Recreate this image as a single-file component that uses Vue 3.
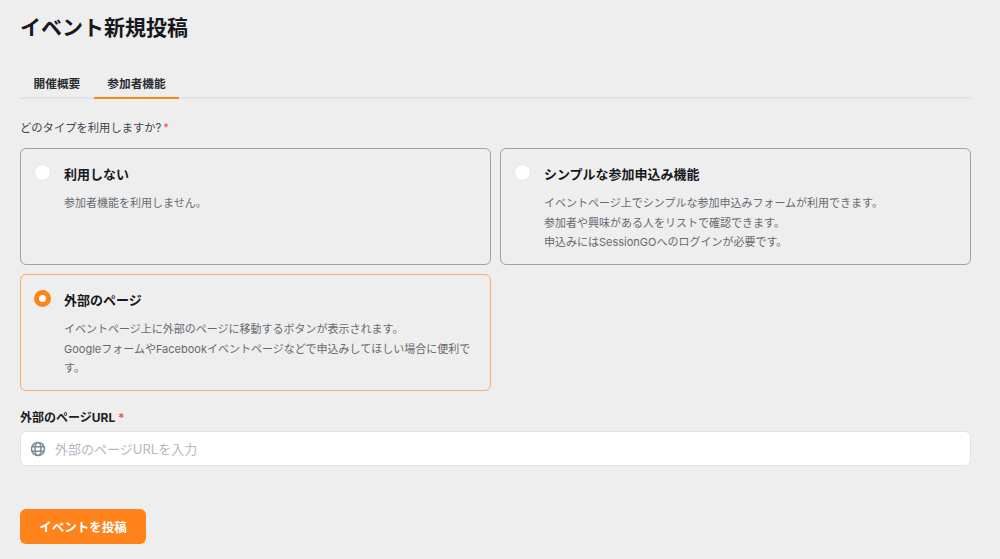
<script setup>
const options = [
  { title: '利用しない', lines: ['参加者機能を利用しません。'], checked: false },
  { title: 'シンプルな参加申込み機能', lines: ['イベントページ上でシンプルな参加申込みフォームが利用できます。', '参加者や興味がある人をリストで確認できます。', '申込みにはSessionGOへのログインが必要です。'], checked: false },
  { title: '外部のページ', lines: ['イベントページ上に外部のページに移動するボタンが表示されます。', 'GoogleフォームやFacebookイベントページなどで申込みしてほしい場合に便利です。'], checked: true }
]
</script>

<template>
  <main class="page">
    <h1 class="title">イベント新規投稿</h1>
    <nav class="tabs">
      <span class="tab">開催概要</span>
      <span class="tab active">参加者機能</span>
    </nav>
    <p class="question">どのタイプを利用しますか?<span class="req q-req">*</span></p>
    <div class="grid">
      <div v-for="o in options" :key="o.title" class="card" :class="{ selected: o.checked }">
        <span class="radio"></span>
        <div class="body">
          <div class="card-title">{{ o.title }}</div>
          <p v-for="l in o.lines" :key="l" class="line">{{ l }}</p>
        </div>
      </div>
    </div>
    <label class="url-label">外部のページURL <span class="req">*</span></label>
    <div class="input">
      <svg class="globe" width="16" height="16" viewBox="0 0 16 16" fill="none" stroke="#7f8894" stroke-width="1.5">
        <circle cx="8" cy="8" r="6.5" />
        <ellipse cx="8" cy="8" rx="3" ry="6.5" />
        <path d="M1.8 5.7h12.4M1.8 10.3h12.4" />
      </svg>
      <span class="placeholder">外部のページURLを入力</span>
    </div>
    <button class="submit" type="button">イベントを投稿</button>
  </main>
</template>

<style>
html, body { background: #eeeeee; }
</style>

<style scoped>
.page {
  box-sizing: border-box;
  height: 559px;
  overflow: hidden;
  padding: 14px 29px 0 20px;
  background: #eeeeee;
  font-family: Inter, "Noto Sans CJK JP", sans-serif;
  color: #1a1a1a;
}
.title { margin: 0; font-size: 21px; line-height: 28px; font-weight: 700; color: #16181d; }
.tabs {
  display: flex;
  margin-top: 26px;
  height: 29px;
  border-bottom: 2px solid #e0e3e8;
}
.tab {
  padding: 2px 13.5px 0;
  font-size: 11.7px;
  font-weight: 700;
  line-height: 28px;
  height: 27px;
  color: #2a2c30;
}
.active { border-bottom: 2px solid #ff821a; }
.question { margin: 20px 0 0; font-size: 11.3px; line-height: 18px; color: #3f434a; }
.req { color: #ef5a4c; }
.q-req { margin-left: 2px; }
.grid {
  display: grid;
  grid-template-columns: 1fr 1fr;
  gap: 9px;
  margin-top: 11px;
}
.card {
  box-sizing: border-box;
  height: 117px;
  display: flex;
  padding: 15px 13px;
  border: 1px solid #9da2a8;
  border-radius: 6px;
}
.selected { border-color: #f9ab68; }
.radio {
  flex: none;
  box-sizing: border-box;
  width: 17px;
  height: 17px;
  border-radius: 50%;
  background: #fff;
  border: 1px solid #e3e6ea;
}
.selected .radio { background: #fff; border: 5px solid #ff821a; }
.body { margin-left: 13px; }
.card-title { font-size: 13px; font-weight: 700; line-height: 18px; color: #16181d; margin-top: 1px; margin-bottom: 11px; }
.line { margin: 0; font-size: 11px; line-height: 19.5px; color: #666a70; }
.url-label { display: block; margin-top: 18px; font-size: 12px; font-weight: 700; line-height: 18px; color: #1e2024; }
.input {
  box-sizing: border-box;
  display: flex;
  align-items: center;
  height: 35px;
  margin-top: 4px;
  padding-left: 9px;
  background: #fff;
  border: 1px solid #dfe3e8;
  border-radius: 6px;
}
.placeholder { margin-left: 9px; font-size: 13px; color: #b3b8bf; }
.submit {
  display: block;
  margin-top: 43px;
  width: 126px;
  height: 35px;
  border: 0;
  border-radius: 6px;
  background: #ff821a;
  color: #fff;
  font: 700 12.5px Inter, "Noto Sans CJK JP", sans-serif;
}
</style>
